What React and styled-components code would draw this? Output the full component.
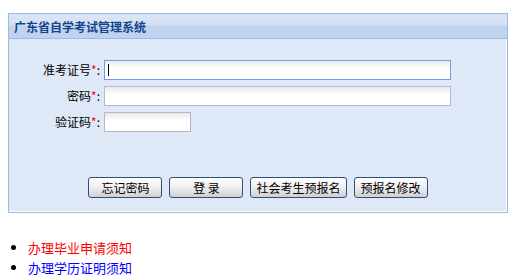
import React from 'react';
import styled, { createGlobalStyle } from 'styled-components';

const GlobalStyle = createGlobalStyle`
  body {
    margin: 8px;
    background: #fff;
    font-family: "Noto Sans CJK SC", "DejaVu Sans", sans-serif;
    font-size: 12px;
  }
`;

const Panel = styled.div`
  width: 500px;
  margin-top: 5px;
  border: 1px solid #99bbe8;
  box-sizing: border-box;
  background: #dfe8f6;
  box-shadow: inset -1px -1px 0 #fff;
`;

const Header = styled.div`
  height: 24px;
  padding-left: 5px;
  display: flex;
  align-items: center;
  border-bottom: 1px solid #99bbe8;
  background: linear-gradient(to bottom, #dbe6f5 0%, #d3e1f3 45%, #c0d4ef 50%, #bfd3ee 100%);
  color: #15428b;
  font-weight: bold;
  font-size: 12px;
`;

const Form = styled.div`
  padding: 21px 0 14px 0;
  display: flex;
  flex-direction: column;
`;

const Row = styled.div`
  display: flex;
  align-items: center;
  height: 20px;
  margin-bottom: 6px;
`;

const Label = styled.label`
  width: 91px;
  text-align: right;
  padding-right: 4px;
  color: #000;
  line-height: 20px;

  span {
    color: #f00;
  }
`;

const Input = styled.div`
  box-sizing: border-box;
  height: 20px;
  width: ${(p) => p.$w}px;
  border: 1px solid #b5b8c8;
  background: linear-gradient(to bottom, #e8eaea 0%, #fff 40%, #fff 100%);
  position: relative;

  ${(p) =>
    p.$focus &&
    `
    border-color: #6a9fe8;
    &::after {
      content: '';
      position: absolute;
      left: 3px;
      top: 3px;
      width: 1px;
      height: 12px;
      background: #000;
    }
  `}
`;

const Buttons = styled.div`
  display: flex;
  justify-content: center;
  gap: 7px;
  margin-top: 39px;
`;

const Button = styled.button`
  box-sizing: border-box;
  min-width: 74px;
  height: 21px;
  padding: 0 5px;
  border: 1px solid #2f4f7a;
  border-radius: 3px;
  background: linear-gradient(to bottom, #fff 0%, #f2f2f2 40%, #e0e0e0 75%, #cfcfcf 100%);
  font-family: inherit;
  font-size: 12px;
  color: #000;
  line-height: 19px;
  white-space: pre;
`;

const List = styled.ul`
  margin: 25px 0 0 0;
  padding-left: 20px;
  font-size: 13px;
  line-height: 20px;
  color: #000;
`;

const Item = styled.li`
  span {
    color: ${(p) => p.$color};
  }
`;

export default function App() {
  return (
    <>
      <GlobalStyle />
      <Panel>
        <Header>广东省自学考试管理系统</Header>
        <Form>
          <Row>
            <Label>准考证号<span>*</span>:</Label>
            <Input $w={347} $focus />
          </Row>
          <Row>
            <Label>密码<span>*</span>:</Label>
            <Input $w={347} />
          </Row>
          <Row>
            <Label>验证码<span>*</span>:</Label>
            <Input $w={87} />
          </Row>
          <Buttons>
            <Button>忘记密码</Button>
            <Button>登 录</Button>
            <Button>社会考生预报名</Button>
            <Button>预报名修改</Button>
          </Buttons>
        </Form>
      </Panel>
      <List>
        <Item $color="#f00"><span>办理毕业申请须知</span></Item>
        <Item $color="#00f"><span>办理学历证明须知</span></Item>
      </List>
    </>
  );
}
